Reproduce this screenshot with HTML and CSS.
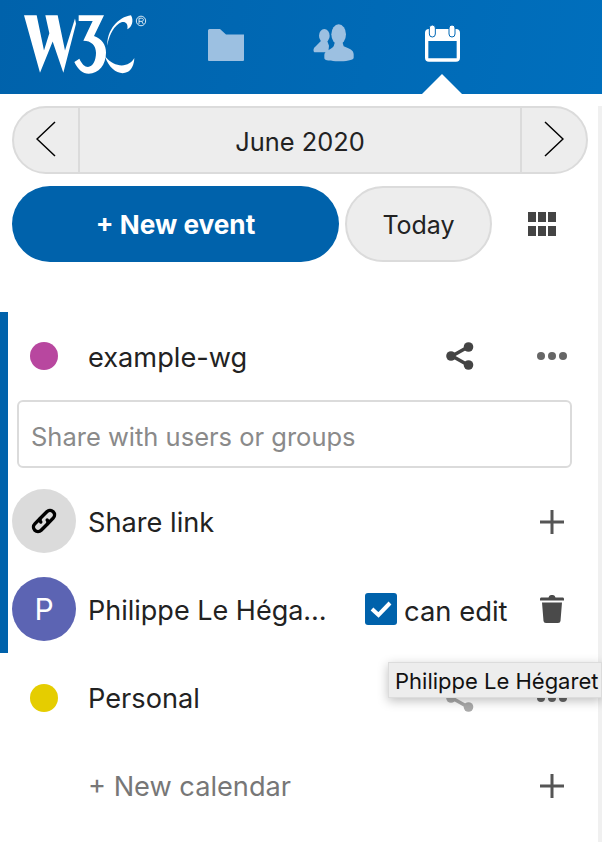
FILE: index.html
```html
<!DOCTYPE html>
<html lang="en">
<head>
<meta charset="UTF-8">
<title>Calendar</title>
<link rel="stylesheet" href="styles.css">
</head>
<body>
<header class="topbar">
    <svg class="logo" viewBox="0 0 390 210" preserveAspectRatio="none" role="img" aria-label="W3C">
        <path class="logo-fill" d="M12 15H50L72 118 88 68 76 15H113L135 118 165 25 168 40 130 183 98 92 60 183Z"/>
        <path class="logo-fill" d="M176 15H252L222 76C246 84 258 102 258 125 258 160 236 186 206 186 188 186 174 174 163 152L178 142C186 158 194 166 204 166 218 166 228 148 228 125 228 104 214 90 190 90L218 32H176Z"/>
        <path class="logo-fill" d="M262 104C260 58 295 20 333 15 342 30 336 50 322 56 326 36 310 30 296 40 276 54 266 80 262 104Z"/>
        <path class="logo-fill" d="M255 135C268 175 300 192 322 181 335 175 342 160 343 140 330 165 288 174 255 135Z"/>
        <circle class="logo-r" cx="363" cy="32" r="14"/>
        <path class="logo-r" d="M357 41V24H365C372 24 372 33 365 33H357M365 33L370 41"/>
    </svg>
    <nav class="apps">
        <svg class="app folder" viewBox="0 0 36 32"><path d="M0 1.500Q0 0 1.500 0H12L18 5.500H36V31Q36 32 35 32H1Q0 32 0 31Z"/></svg>
        <svg class="app people" viewBox="0 0 180 180">
            <ellipse cx="58" cy="62" rx="16" ry="20"/>
            <path d="M50 76H66L72 92 70 112H30C24 112 24 100 30 96Z"/>
            <ellipse cx="101" cy="58" rx="22" ry="30"/>
            <path d="M90 80H112L116 94C130 100 146 104 146 118V128C146 136 120 139 100 139 78 139 58 137 58 130V120C58 108 78 104 86 94Z"/>
        </svg>
        <svg class="app calendar" viewBox="0 0 165 165">
            <path d="M42 42H123Q135 42 135 54V128Q135 140 123 140H42Q30 140 30 128V54Q30 42 42 42ZM40 78V130H125V78Z" fill="#fff" fill-rule="evenodd"/>
            <rect x="43" y="30" width="18" height="36" rx="9" fill="#fff" stroke="#0068b5" stroke-width="3"/>
            <rect x="102" y="30" width="18" height="36" rx="9" fill="#fff" stroke="#0068b5" stroke-width="3"/>
        </svg>
    </nav>
    <span class="caret"></span>
</header>

<main class="content">
    <div class="date-nav">
        <button class="date-arrow left"><svg viewBox="0 0 20 36"><path d="M19 1L1 18 19 35"/></svg></button>
        <button class="date-label">June 2020</button>
        <button class="date-arrow right"><svg viewBox="0 0 20 36"><path d="M1 1L19 18 1 35"/></svg></button>
    </div>

    <div class="actions">
        <button class="new-event">+ New event</button>
        <button class="today">Today</button>
        <svg class="grid-icon" viewBox="0 0 28 24">
            <path d="M0 0H8V10H0ZM10 0H18V10H10ZM20 0H28V10H20ZM0 14H8V24H0ZM10 14H18V24H10ZM20 14H28V24H20Z"/>
        </svg>
    </div>

    <section class="calendars">
        <div class="shared-block">
            <div class="row lowered">
                <span class="dot purple"></span>
                <span class="row-name">example-wg</span>
                <svg class="share-icon" viewBox="0 0 28 28"><use href="#share"/></svg>
                <span class="more"><i></i><i></i><i></i></span>
            </div>
            <div class="share-search"><input type="text" placeholder="Share with users or groups"></div>
            <div class="row person lowered">
                <span class="avatar link">
                    <svg viewBox="0 0 28 28" fill="none" stroke="#000" stroke-width="3.400" stroke-linecap="round">
                        <g transform="rotate(-45 14 14)">
                            <path d="M13 9.500H5.500a4.500 4.500 0 0 0 0 9H14a3 3 0 0 0 3-3"/>
                            <path d="M15 18.500H22.500a4.500 4.500 0 0 0 0-9H14a3 3 0 0 0-3 3"/>
                        </g>
                    </svg>
                </span>
                <span class="row-name">Share link</span>
                <svg class="plus" viewBox="0 0 24 24"><path d="M0 12H24M12 0V24"/></svg>
            </div>
            <div class="row person lowered">
                <span class="avatar initial">P</span>
                <span class="row-name clip">Philippe Le Hégaret</span>
                <span class="check"><svg viewBox="0 0 32 32"><path d="M7 16L13.500 22 25 10"/></svg></span>
                <span class="can-edit">can edit</span>
                <svg class="trash" viewBox="0 0 24 28"><path d="M8.500 2.500Q9 0 11 0H13Q15 0 15.500 2.500H23Q24 2.500 24 4V5.500H0V4Q0 2.500 1 2.500ZM2 7.500H22L20.500 26Q20.300 28 18 28H6Q3.700 28 3.500 26Z"/></svg>
            </div>
        </div>
        <div class="row">
            <span class="dot yellow"></span>
            <span class="row-name">Personal</span>
            <svg class="share-icon faded" viewBox="0 0 28 28"><use href="#share"/></svg>
            <span class="more"><i></i><i></i><i></i></span>
        </div>
        <div class="row new-calendar">
            <span class="row-name">+ New calendar</span>
            <svg class="plus" viewBox="0 0 24 24"><path d="M0 12H24M12 0V24"/></svg>
        </div>
    </section>
</main>

<div class="tooltip">Philippe Le Hégaret</div>

<svg class="defs" width="0" height="0">
    <symbol id="share" viewBox="0 0 28 28">
        <path d="M22 5L6 14 22 23" fill="none" stroke="currentColor" stroke-width="3.500"/>
        <circle cx="22.500" cy="5" r="4.800" fill="currentColor"/>
        <circle cx="5" cy="14" r="4.800" fill="currentColor"/>
        <circle cx="22.500" cy="23" r="4.800" fill="currentColor"/>
    </symbol>
</svg>
</body>
</html>
```

FILE: styles.css
```css
* {
    box-sizing: border-box;
}
body {
    margin: 0;
    height: 842px;
    overflow: hidden;
    position: relative;
    font-family: 'Inter', sans-serif;
    color: #222;
    background: #fff;
}
button {
    font-family: inherit;
    color: inherit;
    cursor: pointer;
}

/* top bar */
.topbar {
    height: 94px;
    display: flex;
    position: relative;
    background: linear-gradient(100deg, #0062ab, #006fbd);
}
.logo {
    width: 130px;
    height: 72px;
    margin: 10px 0 0 20px;
    flex: none;
}
.logo-fill {
    fill: #fff;
}
.logo-r {
    fill: none;
    stroke: #fff;
    stroke-width: 2.500;
}
.apps {
    display: flex;
    align-items: flex-start;
    margin-left: 58px;
    padding-top: 15px;
}
.folder {
    width: 36px;
    height: 32px;
    margin-top: 14px;
    fill: #9cc0e1;
}
.people {
    width: 60px;
    height: 60px;
    margin-left: 61px;
    fill: #9cc0e1;
}
.calendar {
    width: 55px;
    height: 55px;
    margin-left: 50px;
}
.caret {
    position: absolute;
    left: 422px;
    bottom: 0;
    border-left: 20px solid transparent;
    border-right: 20px solid transparent;
    border-bottom: 20px solid #fff;
}

/* page */
.content {
    border-right: 4px solid #f0f0f0;
    height: 748px;
}
.date-nav {
    display: flex;
    height: 68px;
    margin: 12px 10px 0 12px;
    background: #ededed;
    border: 2px solid #dbdbdb;
    border-radius: 34px;
}
.date-nav button {
    border: none;
    background: none;
    padding: 0;
}
.date-arrow {
    width: 66px;
    flex: none;
}
.date-arrow svg {
    width: 20px;
    height: 36px;
    fill: none;
    stroke: #000;
    stroke-width: 1.500;
}
.date-nav .date-arrow.left {
    border-right: 2px solid #dbdbdb;
}
.date-nav .date-arrow.right {
    border-left: 2px solid #dbdbdb;
}
.date-nav .date-label {
    flex: 1;
    font-size: 25.400px;
    padding-top: 2px;
}
.actions {
    display: flex;
    align-items: center;
    margin: 12px 0 0 12px;
}
.new-event {
    width: 327px;
    height: 76px;
    padding-top: 2px;
    border: none;
    border-radius: 38px;
    background: #0062ab;
    color: #fff;
    font-size: 26.200px;
    font-weight: 700;
}
.today {
    width: 147px;
    height: 76px;
    margin-left: 6px;
    padding-top: 2px;
    border: 2px solid #dbdbdb;
    border-radius: 38px;
    background: #ededed;
    font-size: 25px;
}
.grid-icon {
    width: 28px;
    height: 24px;
    margin-left: 36px;
    fill: #444;
}

/* calendar list */
.calendars {
    margin-top: 50px;
}
.shared-block {
    border-left: 8px solid #0062ab;
    height: 341px;
}
.row {
    display: flex;
    align-items: center;
    height: 88px;
    position: relative;
}
.shared-block .row:first-child {
    margin-left: -8px;
}
.dot {
    width: 28px;
    height: 28px;
    border-radius: 50%;
    margin-left: 30px;
    flex: none;
}
.purple {
    background: #b8479f;
}
.yellow {
    background: #e5cd00;
}
.row-name {
    font-size: 27.200px;
    margin-left: 30px;
}
.lowered .row-name,
.lowered .can-edit {
    margin-top: 3px;
}
.share-icon {
    width: 28px;
    height: 28px;
    margin-left: auto;
    color: #444;
}
.share-icon.faded {
    color: #aaa;
}
.more {
    display: flex;
    gap: 3px;
    margin: 0 31px 0 63px;
}
.more i {
    width: 8px;
    height: 8px;
    border-radius: 50%;
    background: #666;
}
.share-search {
    padding: 0 26px 0 9px;
    margin-bottom: 9px;
}
.share-search input {
    width: 100%;
    height: 68px;
    border: 2px solid #dbdbdb;
    border-radius: 6px;
    padding: 5px 12px 0;
    font: 25.500px 'Inter', sans-serif;
    outline: none;
}
.share-search input::placeholder {
    color: #8a8a8a;
    opacity: 1;
}
.avatar {
    width: 64px;
    height: 64px;
    border-radius: 50%;
    margin-left: 4px;
    flex: none;
    display: flex;
    align-items: center;
    justify-content: center;
}
.avatar.link {
    background: #dbdbdb;
}
.avatar.link svg {
    width: 28px;
    height: 28px;
    overflow: visible;
}
.avatar.initial {
    background: #5c64b3;
    color: #fff;
    font-size: 30px;
}
.person .row-name {
    margin-left: 12px;
}
.person .clip {
    width: 240px;
    font-size: 27px;
    overflow: hidden;
    white-space: nowrap;
    text-overflow: ellipsis;
    flex: none;
}
.plus {
    width: 24px;
    height: 24px;
    margin: 0 34px 0 auto;
    fill: none;
    stroke: #555;
    stroke-width: 3;
}
.lowered .plus {
    margin-top: 2px;
}
.check {
    width: 32px;
    height: 32px;
    margin-left: 37px;
    border-radius: 3px;
    background: #0062ab;
    flex: none;
}
.check svg {
    display: block;
    fill: none;
    stroke: #fff;
    stroke-width: 4;
}
.can-edit {
    font-size: 27.400px;
    margin-left: 7px;
}
.trash {
    width: 24px;
    height: 28px;
    margin: 0 34px 0 auto;
    fill: #4a4a4a;
}
.new-calendar .row-name {
    margin-left: 88px;
    color: #777;
}
.calendars > .row:nth-child(2) {
    margin-top: 1px;
}
.tooltip {
    position: absolute;
    left: 388px;
    top: 662px;
    width: 214px;
    height: 36px;
    padding-left: 6px;
    line-height: 36px;
    font-size: 22px;
    white-space: nowrap;
    color: #111;
    background: #ededed;
    border: 1px solid #dcdcdc;
    box-shadow: 0 3px 10px rgba(0, 0, 0, 0.25);
}
.defs {
    position: absolute;
}
```
